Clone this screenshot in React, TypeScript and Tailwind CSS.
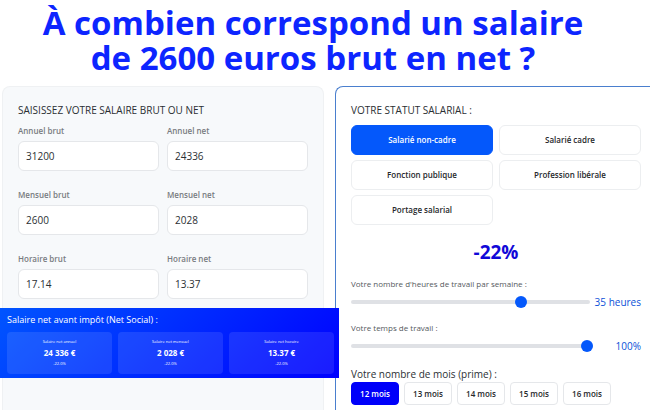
import { useState } from "react";

const salaryFields = [
  { id: "annuel-brut", label: "Annuel brut", value: "31200" },
  { id: "annuel-net", label: "Annuel net", value: "24336" },
  { id: "mensuel-brut", label: "Mensuel brut", value: "2600" },
  { id: "mensuel-net", label: "Mensuel net", value: "2028" },
  { id: "horaire-brut", label: "Horaire brut", value: "17.14" },
  { id: "horaire-net", label: "Horaire net", value: "13.37" },
];

const results = [
  { label: "Salaire net annuel", value: "24 336 €" },
  { label: "Salaire net mensuel", value: "2 028 €" },
  { label: "Salaire net horaire", value: "13.37 €" },
];

const statuses = [
  "Salarié non-cadre",
  "Salarié cadre",
  "Fonction publique",
  "Profession libérale",
  "Portage salarial",
];

const months = [12, 13, 14, 15, 16];

const sliderClass =
  "h-3 min-w-0 flex-1 cursor-pointer appearance-none bg-transparent [&::-webkit-slider-runnable-track]:h-1 [&::-webkit-slider-runnable-track]:rounded-full [&::-webkit-slider-runnable-track]:bg-[#dfe1e5] [&::-webkit-slider-thumb]:-mt-1 [&::-webkit-slider-thumb]:size-3 [&::-webkit-slider-thumb]:appearance-none [&::-webkit-slider-thumb]:rounded-full [&::-webkit-slider-thumb]:bg-[#0458fb]";

function SalaryForm() {
  return (
    <section className="rounded-t-lg border border-b-0 border-[#eff1f3] bg-[#f7f9fb] px-[15px] pt-[15px]">
      <h2 className="text-[10px] leading-4 font-medium text-[#2b2f33]">
        SAISISSEZ VOTRE SALAIRE BRUT OU NET
      </h2>
      <div className="mt-[7px] grid grid-cols-2 gap-x-2 gap-y-[18px]">
        {salaryFields.map((field) => (
          <div key={field.id} className="flex flex-col gap-1">
            <label htmlFor={field.id} className="text-[8px] leading-3 font-semibold text-[#777b80]">
              {field.label}
            </label>
            <input
              id={field.id}
              defaultValue={field.value}
              className="h-[30px] w-full rounded-md border border-[#e5e7ea] bg-white px-[7px] text-[10px] font-medium text-[#2b2f33]"
            />
          </div>
        ))}
      </div>
    </section>
  );
}

function ResultBanner() {
  return (
    <section className="absolute top-[222px] left-0 w-[calc(50%+14px)] bg-linear-[135deg] from-[#0055ff] to-[#0000ff] pt-1 pr-[5px] pb-1 pl-[7px] text-white">
      <h2 className="text-[9px] leading-4">Salaire net avant impôt (Net Social) :</h2>
      <div className="mt-1 grid grid-cols-3 gap-[6px]">
        {results.map((result) => (
          <div
            key={result.label}
            className="flex flex-col items-center rounded-sm bg-white/10 py-[5px]"
          >
            <span className="text-[4px] leading-[10px]">{result.label}</span>
            <strong className="text-[8px] leading-3 font-bold">{result.value}</strong>
            <span className="text-[4px] leading-[10px]">-22.0%</span>
          </div>
        ))}
      </div>
    </section>
  );
}

function StatusPanel() {
  const [status, setStatus] = useState(statuses[0]);
  const [month, setMonth] = useState(12);
  const [hours, setHours] = useState(35);
  const [time, setTime] = useState(100);

  return (
    <section className="rounded-tl-lg border-t border-l border-[#4a7fce] pt-[15px] pr-[9px] pb-[5px] pl-[15px]">
      <h2 className="text-[10px] leading-4 font-medium text-[#2b2f33]">VOTRE STATUT SALARIAL :</h2>
      <div className="mt-[7px] grid grid-cols-2 gap-x-[6px] gap-y-[5px]">
        {statuses.map((name) => (
          <button
            key={name}
            type="button"
            onClick={() => setStatus(name)}
            className={
              name === status
                ? "h-[30px] rounded-md border border-[#0458fb] bg-[#0458fb] text-[8px] font-semibold text-white"
                : "h-[30px] rounded-md border border-[#eceef0] bg-white text-[8px] font-semibold text-[#26282b]"
            }
          >
            {name}
          </button>
        ))}
      </div>

      <p className="mt-[15px] text-center text-[19px] leading-6 font-bold text-[#1108d8]">-22%</p>

      <label htmlFor="hours" className="mt-[14px] block text-[8px] leading-3 font-medium text-[#55595d]">
        Votre nombre d'heures de travail par semaine :
      </label>
      <div className="mt-1 flex items-center gap-[5px]">
        <input
          id="hours"
          type="range"
          min={1}
          max={48}
          value={hours}
          onChange={(event) => setHours(Number(event.target.value))}
          className={sliderClass}
        />
        <output htmlFor="hours" className="text-[10px] leading-4 font-medium text-[#0a50d8]">
          {hours} heures
        </output>
      </div>

      <label htmlFor="time" className="mt-3 block text-[8px] leading-3 font-medium text-[#55595d]">
        Votre temps de travail :
      </label>
      <div className="mt-1 flex items-center">
        <input
          id="time"
          type="range"
          min={10}
          max={100}
          value={time}
          onChange={(event) => setTime(Number(event.target.value))}
          className={sliderClass}
        />
        <output htmlFor="time" className="w-12 text-right text-[10px] leading-4 font-medium text-[#0a50d8]">
          {time}%
        </output>
      </div>

      <h3 className="mt-3 text-[10px] leading-4 text-[#2b2f33]">Votre nombre de mois (prime) :</h3>
      <div className="flex gap-[5px]">
        {months.map((count) => (
          <button
            key={count}
            type="button"
            onClick={() => setMonth(count)}
            className={
              count === month
                ? "h-[23px] w-12 rounded-sm border border-[#0000fa] bg-[#0000fa] text-[8px] font-semibold text-white"
                : "h-[23px] w-12 rounded-sm border border-[#e5e7ea] bg-white text-[8px] font-semibold text-[#26282b]"
            }
          >
            {count} mois
          </button>
        ))}
      </div>
    </section>
  );
}

export default function App() {
  return (
    <div className="bg-white pb-[10px] font-['Open_Sans','Noto_Sans',sans-serif]">
      <h1 className="mx-auto max-w-[600px] pt-[5px] pr-6 text-center text-[33px] leading-[35px] font-bold text-[#0d25ff]">
        À combien correspond un salaire de 2600 euros brut en net ?
      </h1>
      <main className="relative mt-[11px] grid grid-cols-[322fr_315fr] gap-[11px] pl-[2px]">
        <SalaryForm />
        <StatusPanel />
        <ResultBanner />
      </main>
    </div>
  );
}
